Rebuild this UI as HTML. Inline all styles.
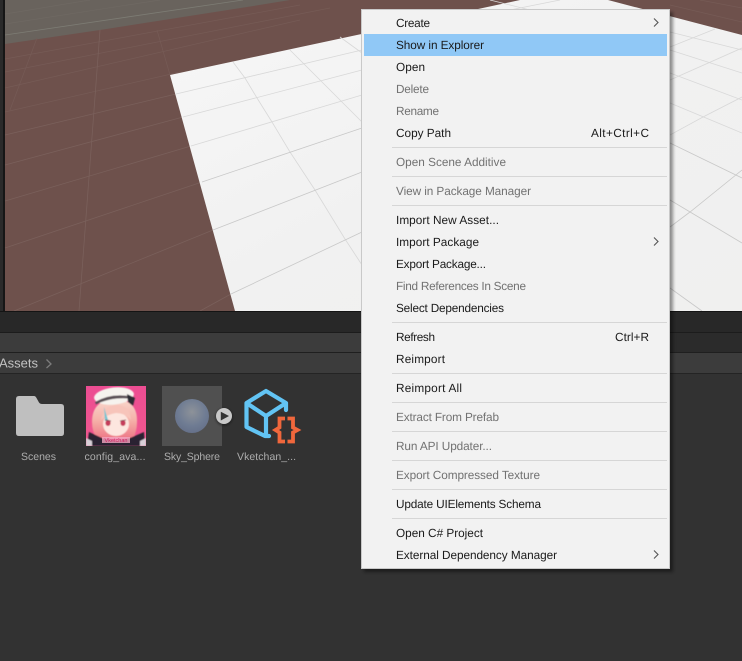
<!DOCTYPE html>
<html><head><meta charset="utf-8"><style>
html,body{margin:0;padding:0;width:742px;height:661px;overflow:hidden;background:#323232}
svg{display:block;text-rendering:geometricPrecision}
.m text{font-family:"Liberation Sans",sans-serif;font-size:11.8px;fill:#1a1a1a}
.m text.d{fill:#727272}
.l text{font-family:"Liberation Sans",sans-serif;font-size:10.5px;fill:#adadad;text-anchor:middle}
</style></head><body>
<svg width="742" height="661" viewBox="0 0 742 661" xmlns="http://www.w3.org/2000/svg">
<defs>
<linearGradient id="pl" x1="0" y1="0" x2="1" y2="1"><stop offset="0" stop-color="#f7f7f7"/><stop offset=".5" stop-color="#f1f1f1"/><stop offset="1" stop-color="#f0f0ef"/></linearGradient>
<radialGradient id="sp" cx=".5" cy=".38" r=".62"><stop offset="0" stop-color="#8d9299"/><stop offset=".65" stop-color="#6f7c93"/><stop offset="1" stop-color="#66718a"/></radialGradient>
<linearGradient id="hair" x1="0" y1="0" x2="0" y2="1"><stop offset="0" stop-color="#f9d8cc"/><stop offset=".55" stop-color="#f5b0a8"/><stop offset="1" stop-color="#ee7a88"/></linearGradient>
<linearGradient id="pk" x1="0" y1="0" x2="0" y2="1"><stop offset="0" stop-color="#ec4d92"/><stop offset="1" stop-color="#f0588e"/></linearGradient>
<filter id="sh" x="-20%" y="-20%" width="140%" height="140%"><feGaussianBlur stdDeviation="1.6"/></filter>
<filter id="bl" x="-30%" y="-30%" width="160%" height="160%"><feGaussianBlur stdDeviation="1"/></filter>
<filter id="soft" x="-5%" y="-5%" width="110%" height="110%"><feGaussianBlur stdDeviation=".45"/></filter>
<clipPath id="pc"><rect x="86" y="386" width="60" height="60"/></clipPath>
</defs>

<!-- scene -->
<rect x="0" y="0" width="742" height="312" fill="#2a2a2a"/>
<rect x="3" y="0" width="2" height="312" fill="#161616"/>
<rect x="5" y="0" width="737" height="311" fill="#6e514c"/>
<polygon points="5,44 100,30 247,7 290,0 5,0" fill="#69635d"/>
<g stroke="#765b56" stroke-width=".7" fill="none">
<path d="M5,59 L300,5M5,72 L330,8M5,88 L300,20M5,112 L180,72"/>
<path d="M10,110 L37,38M157,30 L170,75"/>
<path d="M670,5 L742,22M700,0 L742,8"/>
</g>
<g stroke="#7a605b" stroke-width=".8" fill="none">
<path d="M5,135 L176,94M5,165 L183,117M5,201 L191,146M5,248 L202,182M14,311 L213,230M200,311 L231,294"/>
<path d="M100,30 L79,311"/>
</g>
<g stroke="#6f6963" stroke-width=".7" fill="none"><path d="M5,14 L90,0M5,24 L160,0"/></g>
<path d="M5,35 L243,0" stroke="#7d7c74" stroke-width=".8" fill="none"/>
<polygon points="170,75 520,0 608,0 742,35 742,311 235,311" fill="url(#pl)"/>
<g stroke="#d8d8d8" stroke-width=".8" fill="none">
<path d="M176,94 L362,50M183,117 L362,70M191,146 L362,95"/>
<path d="M233,62 L245,78 L257,98 L272,122 L290,152 L315,190 L345,239 L362,265M290,50 L320,80 L362,122M340,37 L362,53"/>
<path d="M670,47 L715,29M670,80 L742,48M670,135 L703,117 L742,97"/>
<path d="M670,32 L742,50M670,50 L742,73M670,73 L742,100M670,103 L742,133"/>
<path d="M490,0 L530,10M560,0 L500,12"/>
</g>
<g stroke="#c8c8c8" stroke-width=".8" fill="none">
<path d="M202,182 L362,128M213,230 L362,172M231,294 L362,232"/>
<path d="M670,227 L690,212 L742,170M670,143 L742,178M670,200 L742,243M670,288 L702,311"/>
</g>
<rect x="0" y="311" width="742" height="1" fill="#141414"/>

<!-- panels -->
<rect x="0" y="312" width="742" height="20" fill="#282828"/>
<rect x="0" y="332" width="742" height="1" fill="#1c1c1c"/>
<rect x="0" y="333" width="362" height="19" fill="#3c3c3c"/>
<rect x="362" y="333" width="380" height="19" fill="#2b2b2b"/>
<rect x="0" y="352" width="742" height="1" fill="#1f1f1f"/>
<rect x="0" y="353" width="742" height="20" fill="#3c3c3c"/>
<rect x="0" y="373" width="742" height="1" fill="#242424"/>
<rect x="0" y="374" width="742" height="287" fill="#323232"/>
<text x="-1" y="367.500" font-family="Liberation Sans, sans-serif" font-size="13" fill="#c2c2c2" textLength="39" lengthAdjust="spacing">Assets</text>
<path d="M46.500,359.500 L51,364 L46.500,368" stroke="#7c7c7c" stroke-width="1.300" fill="none"/>

<!-- folder -->
<path d="M19,396 H34 Q35.500,396 36.500,398 L39,402.500 Q40,404 42,404 H61 Q64,404 64,407 V433 Q64,436 61,436 H19 Q16,436 16,433 V399 Q16,396 19,396 Z" fill="#bfbfbf"/>

<!-- portrait -->
<g clip-path="url(#pc)">
<rect x="86" y="386" width="60" height="60" fill="url(#pk)"/>
<g filter="url(#soft)">
<path d="M92,422 Q92,400 115,399 Q138,400 137,422 Q137,432 133,438 H97 Q92,432 92,422Z" fill="url(#hair)"/>
<ellipse cx="116" cy="424" rx="13" ry="12" fill="#fde6df"/>
<path d="M101,420 Q103,406 116,405 Q130,405 131,420 Q125,413 116,413 Q108,414 101,420Z" fill="#f7c4ba"/>
<path d="M104,407 L108,420 L105,421 Z" fill="#72c4d2"/>
<ellipse cx="108" cy="423" rx="2.600" ry="3" fill="#c63a5a"/>
<ellipse cx="123" cy="423" rx="2.600" ry="3" fill="#c63a5a"/>
<path d="M105,420 L111,421M120,421 L126,420" stroke="#6a3a44" stroke-width=".8"/>
<ellipse cx="114" cy="396" rx="20" ry="8.500" fill="#f6f3ee" transform="rotate(-6 114 396)"/>
<path d="M95,402 Q112,392 134,397 L134,399 Q112,396 96,404.500Z" fill="#5a4f55"/>
<path d="M127,394 L135,398 L133,406 L128,402Z" fill="#2c2a33"/>
<path d="M87,446 L89,432 L102,438 L116,441 L130,438 L144,432 L145,446Z" fill="#2c2230"/>
<path d="M86,446 V438 L92,441 L92,446Z M146,446 V438 L140,441 L140,446Z" fill="#d8d0d8"/>
</g>
<rect x="102" y="437" width="28" height="6" fill="#f4a8c0" opacity=".8"/>
<text x="116" y="442" font-family="Liberation Sans, sans-serif" font-size="5.500" fill="#d02060" text-anchor="middle">Vketchan</text>
</g>

<!-- sky sphere -->
<rect x="162" y="386" width="60" height="60" fill="#505050"/>
<circle cx="192" cy="416" r="17" fill="url(#sp)"/>
<circle cx="224" cy="417" r="8.500" fill="#111" opacity=".5" filter="url(#bl)"/>
<circle cx="224" cy="416" r="8" fill="#c9c9c9"/>
<path d="M220.800,411.800 L229,416 L220.800,420.500Z" fill="#333"/>

<!-- script icon -->
<g fill="none" stroke="#62c4f4" stroke-width="4.200" stroke-linejoin="round" stroke-linecap="round">
<path d="M266,391 L286,403 V410M266,391 L246.500,403 V427 L265,436 H269M246.500,403 L266,416 L286,403M266,416 V435"/>
</g>
<rect x="272" y="416" width="30" height="30" fill="#323232"/>
<g fill="none" stroke="#f0673c" stroke-width="3.800" stroke-linejoin="miter" stroke-miterlimit="6">
<path d="M285,418.500 H279.500 V427.500 L275.500,430 L279.500,432.500 V441.500 H285"/>
<path d="M287.500,418.500 H293 V427.500 L297.500,430 L293,432.500 V441.500 H287.500"/>
</g>

<g class="l">
<text x="38.500" y="460" textLength="35" lengthAdjust="spacing">Scenes</text>
<text x="115" y="460" textLength="61" lengthAdjust="spacing">config_ava...</text>
<text x="192" y="460" textLength="56" lengthAdjust="spacing">Sky_Sphere</text>
<text x="266.500" y="460" textLength="59" lengthAdjust="spacing">Vketchan_...</text>
</g>

<!-- menu -->
<rect x="364" y="12" width="309" height="560" fill="#000" opacity=".42" filter="url(#sh)"/>
<rect x="361.500" y="9.500" width="308" height="559" fill="#f2f2f2" stroke="#c9c9c9"/>
<rect x="364" y="34" width="303" height="22" fill="#90c8f6"/>
<g fill="#d6d6d6">
<rect x="392" y="147" width="275" height="1"/><rect x="392" y="176" width="275" height="1"/><rect x="392" y="205" width="275" height="1"/><rect x="392" y="322" width="275" height="1"/><rect x="392" y="373" width="275" height="1"/><rect x="392" y="402" width="275" height="1"/><rect x="392" y="431" width="275" height="1"/><rect x="392" y="460" width="275" height="1"/><rect x="392" y="489" width="275" height="1"/><rect x="392" y="518" width="275" height="1"/>
</g>
<g class="m">
<text x="396" y="27" textLength="34" lengthAdjust="spacing">Create</text>
<text x="396" y="49" textLength="88" lengthAdjust="spacing">Show in Explorer</text>
<text x="396" y="71" textLength="29" lengthAdjust="spacing">Open</text>
<text class="d" x="396" y="93" textLength="33" lengthAdjust="spacing">Delete</text>
<text class="d" x="396" y="115" textLength="43" lengthAdjust="spacing">Rename</text>
<text x="396" y="137" textLength="55" lengthAdjust="spacing">Copy Path</text>
<text x="591" y="137" textLength="58" lengthAdjust="spacing">Alt+Ctrl+C</text>
<text class="d" x="396" y="166" textLength="110" lengthAdjust="spacing">Open Scene Additive</text>
<text class="d" x="396" y="195" textLength="135" lengthAdjust="spacing">View in Package Manager</text>
<text x="396" y="224" textLength="103" lengthAdjust="spacing">Import New Asset...</text>
<text x="396" y="246" textLength="83" lengthAdjust="spacing">Import Package</text>
<text x="396" y="268" textLength="90" lengthAdjust="spacing">Export Package...</text>
<text class="d" x="396" y="290" textLength="130" lengthAdjust="spacing">Find References In Scene</text>
<text x="396" y="312" textLength="108" lengthAdjust="spacing">Select Dependencies</text>
<text x="396" y="341" textLength="39" lengthAdjust="spacing">Refresh</text>
<text x="615" y="341" textLength="34" lengthAdjust="spacing">Ctrl+R</text>
<text x="396" y="363" textLength="49" lengthAdjust="spacing">Reimport</text>
<text x="396" y="392" textLength="66" lengthAdjust="spacing">Reimport All</text>
<text class="d" x="396" y="421" textLength="103" lengthAdjust="spacing">Extract From Prefab</text>
<text class="d" x="396" y="450" textLength="96" lengthAdjust="spacing">Run API Updater...</text>
<text class="d" x="396" y="479" textLength="144" lengthAdjust="spacing">Export Compressed Texture</text>
<text x="396" y="508" textLength="145" lengthAdjust="spacing">Update UIElements Schema</text>
<text x="396" y="537" textLength="87" lengthAdjust="spacing">Open C# Project</text>
<text x="396" y="559" textLength="161" lengthAdjust="spacing">External Dependency Manager</text>
</g>
<g fill="none" stroke="#555" stroke-width="1.100">
<path d="M654,18.500 L658,22.500 L654,26.500"/>
<path d="M654,237.500 L658,241.500 L654,245.500"/>
<path d="M654,550.500 L658,554.500 L654,558.500"/>
</g>
</svg>
</body></html>
